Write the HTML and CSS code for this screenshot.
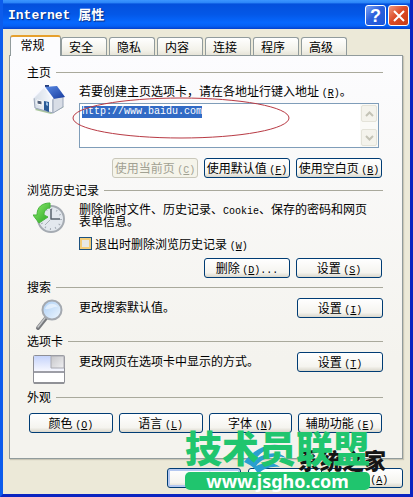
FILE: index.html
```html
<!DOCTYPE html>
<html lang="zh-CN">
<head>
    <meta charset="UTF-8">
    <meta name="viewport" content="width=device-width, initial-scale=1.0">
    <title>Internet 属性</title>
    <link rel="stylesheet" href="styles.css">
</head>
<body>
    <div class="window">
        <header class="title-bar">
            <h1>Internet 属性</h1>
            <button type="button" class="caption-button help" aria-label="帮助">?</button>
            <button type="button" class="caption-button close" aria-label="关闭">
                <svg width="12" height="12" viewBox="0 0 12 12"><path d="M1 1l10 10M11 1L1 11" stroke="#fff" stroke-width="2"/></svg>
            </button>
        </header>
        <main class="dialog">
            <div class="tabs" role="tablist">
                <button type="button" role="tab" class="tab active" aria-selected="true">常规</button>
                <button type="button" role="tab" class="tab">安全</button>
                <button type="button" role="tab" class="tab">隐私</button>
                <button type="button" role="tab" class="tab">内容</button>
                <button type="button" role="tab" class="tab">连接</button>
                <button type="button" role="tab" class="tab">程序</button>
                <button type="button" role="tab" class="tab">高级</button>
            </div>
            <div class="panel">
                <section class="group home">
                    <h2>主页</h2>
                    <div class="row">
                        <svg class="icon" width="32" height="32" viewBox="0 0 32 32">
                            <defs>
                                <linearGradient id="roof" x1="0" y1="0" x2="1" y2="1"><stop offset="0" stop-color="#5b8ce6"/><stop offset="1" stop-color="#173b9e"/></linearGradient>
                                <linearGradient id="wall" x1="0" y1="0" x2="1" y2="0"><stop offset="0" stop-color="#d5dde8"/><stop offset="1" stop-color="#f8fafc"/></linearGradient>
                            </defs>
                            <path d="M2 26l16 4 13-7-3-2-24 3z" fill="#a9c69c"/>
                            <path d="M12 1h4v6h-4z" fill="#253c79"/>
                            <path d="M1 14L11 4l9 10v15L2 24z" fill="url(#wall)" stroke="#9aa5b8"/>
                            <path d="M20 14l10-1v10l-10 6z" fill="#d8dde6" stroke="#9aa5b8"/>
                            <path d="M11 3l13-1 8 11-12 2z" fill="url(#roof)"/>
                            <path d="M0 14L11 3l9 12" fill="none" stroke="#f7f9ff" stroke-width="2"/>
                            <path d="M4 16l5 1v4l-5-1z" fill="#526079" stroke="#fff"/>
                            <path d="M11 17l5 1v10l-5-2z" fill="#2a5a96"/>
                            <path d="M13 18l2 1v3l-2-1z" fill="#9bc0e4"/>
                        </svg>
                        <div class="body">
                            <label for="home-page">若要创建主页选项卡，请在各地址行键入地址 <span class="key">(<u>R</u>)</span>。</label>
                            <div class="address">
                                <textarea id="home-page" spellcheck="false">http://www.baidu.com</textarea>
                                <div class="scroll">
                                    <button type="button" aria-label="向上"><svg width="9" height="6" viewBox="0 0 9 6"><path d="M1 5l3.500-3.500L8 5" fill="none" stroke="#c4c3b6" stroke-width="2"/></svg></button>
                                    <button type="button" aria-label="向下"><svg width="9" height="6" viewBox="0 0 9 6"><path d="M1 1l3.500 3.500L8 1" fill="none" stroke="#c4c3b6" stroke-width="2"/></svg></button>
                                </div>
                                <svg class="circle" viewBox="0 0 218 42"><ellipse cx="109" cy="21" rx="108" ry="20" fill="none" stroke="#b83a44"/></svg>
                            </div>
                        </div>
                    </div>
                    <div class="buttons">
                        <button type="button" class="button" disabled>使用当前页 <span class="key">(<u>C</u>)</span></button>
                        <button type="button" class="button">使用默认值 <span class="key">(<u>F</u>)</span></button>
                        <button type="button" class="button">使用空白页 <span class="key">(<u>B</u>)</span></button>
                    </div>
                </section>
                <section class="group history">
                    <h2>浏览历史记录</h2>
                    <div class="row">
                        <svg class="icon" width="32" height="32" viewBox="0 0 32 32">
                            <defs>
                                <linearGradient id="arrow" x1="0" y1="0" x2="1" y2="1"><stop offset="0" stop-color="#91ef70"/><stop offset="1" stop-color="#27a322"/></linearGradient>
                            </defs>
                            <circle cx="18" cy="17" r="13" fill="#e3e8ee" stroke="#a5abb2" stroke-width="2"/>
                            <circle cx="18" cy="17" r="10" fill="none" stroke="#a3abb4" stroke-width="2" stroke-dasharray="1 4.236"/>
                            <path d="M18 7v10h9" fill="none" stroke="#59636e" stroke-width="1.500"/>
                            <path d="M18 17l-6 6" stroke="#a8afb7"/>
                            <path d="M17 1C9 1 4 5 4 13H0l6 8 9-6-4-2c0-4 2-7 6-7z" fill="url(#arrow)" stroke="#49b53d"/>
                        </svg>
                        <div class="body">
                            <p>删除临时文件、历史记录、<span class="key">Cookie</span>、保存的密码和网页表单信息。</p>
                            <label class="check"><input type="checkbox"><span>退出时删除浏览历史记录 <span class="key">(<u>W</u>)</span></span></label>
                        </div>
                    </div>
                    <div class="buttons">
                        <button type="button" class="button">删除 <span class="key">(<u>D</u>)...</span></button>
                        <button type="button" class="button">设置 <span class="key">(<u>S</u>)</span></button>
                    </div>
                </section>
                <section class="group search">
                    <h2>搜索</h2>
                    <div class="row">
                        <svg class="icon" width="32" height="32" viewBox="0 0 32 32">
                            <defs>
                                <linearGradient id="lens" x1="0" y1="0" x2="1" y2="1"><stop offset="0" stop-color="#a9cdf5"/><stop offset="1" stop-color="#f0f8ff"/></linearGradient>
                            </defs>
                            <path d="M13 19L5 29" stroke="#77797c" stroke-width="4" stroke-linecap="round"/>
                            <path d="M12 19L5 28" stroke="#c4c6c8" stroke-width="1.500" stroke-linecap="round"/>
                            <circle cx="19" cy="11" r="9.500" fill="url(#lens)" stroke="#a4a9b0" stroke-width="2"/>
                            <path d="M12 10c2-6 9-7 13-2-4-1-8 3-13 2z" fill="#fff" opacity=".5"/>
                        </svg>
                        <p class="body">更改搜索默认值。</p>
                        <button type="button" class="button">设置 <span class="key">(<u>I</u>)</span></button>
                    </div>
                </section>
                <section class="group tab-options">
                    <h2>选项卡</h2>
                    <div class="row">
                        <svg class="icon" width="32" height="32" viewBox="0 0 32 32">
                            <defs>
                                <linearGradient id="page" x1="0" y1="0" x2="0" y2="1"><stop offset="0" stop-color="#c5d3fb"/><stop offset="1" stop-color="#f7f8ff"/></linearGradient>
                                <linearGradient id="page-back" x1="0" y1="0" x2="1" y2="1"><stop offset="0" stop-color="#c6c6ca"/><stop offset="1" stop-color="#efeff1"/></linearGradient>
                            </defs>
                            <rect x=".5" y="2.500" width="31" height="28" rx="1" fill="#fff" stroke="#8e8f96"/>
                            <path d="M1 3h17v12h13v3H1z" fill="url(#page)"/>
                            <path d="M18 3h13v12H18z" fill="url(#page-back)" stroke="#a9a9b0"/>
                            <path d="M1 19h30" stroke="#9d9ea6" stroke-width="2"/>
                            <path d="M1 30h30" stroke="#909196" stroke-width="2"/>
                        </svg>
                        <p class="body">更改网页在选项卡中显示的方式。</p>
                        <button type="button" class="button">设置 <span class="key">(<u>T</u>)</span></button>
                    </div>
                </section>
                <section class="group look">
                    <h2>外观</h2>
                    <div class="buttons">
                        <button type="button" class="button">颜色 <span class="key">(<u>O</u>)</span></button>
                        <button type="button" class="button">语言 <span class="key">(<u>L</u>)</span></button>
                        <button type="button" class="button">字体 <span class="key">(<u>N</u>)</span></button>
                        <button type="button" class="button">辅助功能 <span class="key">(<u>E</u>)</span></button>
                    </div>
                </section>
            </div>
            <footer class="actions">
                <button type="button" class="button default">确定</button>
                <button type="button" class="button">取消</button>
                <button type="button" class="button">应用 <span class="key">(<u>A</u>)</span></button>
            </footer>
        </main>
        <div class="site-mark">
            <svg width="58" height="34" viewBox="0 0 54 34">
                <path d="M2 20C14 4 34-2 46 7 32 3 20 8 14 17c10-7 24-8 30-1-12-4-25 1-30 8 8-4 18-4 24 1-10-1-17 2-22 7-2-5-7-9-14-12z" fill="#2b9fd0"/>
            </svg>
            <span>系统之家</span>
        </div>
        <div class="watermark">
            <strong>技术员联盟</strong>
            <span>www.jsgho.com</span>
        </div>
    </div>
    <script src="script.js"></script>
</body>
</html>
```

FILE: styles.css
```css
* {
    box-sizing: border-box;
}
body {
    margin: 0;
    font-family: "Noto Sans CJK SC", sans-serif;
    font-size: 12px;
    line-height: 12px;
    color: #000;
    background-color: #0831d9;
}
h1, h2, p {
    margin: 0;
    font-weight: normal;
}
button, textarea, input {
    font: inherit;
    margin: 0;
}
.key {
    font-family: "Liberation Mono", monospace;
    font-size: 10px;
    line-height: 0;
}
.window {
    position: relative;
    display: flex;
    flex-direction: column;
    min-height: 100vh;
    border: solid #0a24c0;
    border-width: 0 3px 3px;
    border-left-color: #0c5cec;
}
.title-bar {
    display: flex;
    align-items: center;
    gap: 2px;
    height: 29px;
    padding: 2px 1px 0 5px;
    background: linear-gradient(#3c96ff 0, #2c86f8 9%, #0450dc 14%, #0458e8 50%, #0668ff 78%, #0560f4 90%, #0340cc 100%);
}
.title-bar h1 {
    flex: 1;
    font-family: "Liberation Mono", "Noto Sans CJK SC", monospace;
    font-size: 13px;
    font-weight: bold;
    line-height: 20px;
    color: #fff;
    text-shadow: 1px 1px 1px #0a2c80;
}
.caption-button {
    display: flex;
    align-items: center;
    justify-content: center;
    width: 21px;
    height: 21px;
    padding: 0;
    border: 1px solid #fff;
    border-radius: 3px;
    color: #fff;
}
.help {
    font-family: "Liberation Sans", sans-serif;
    font-size: 18px;
    font-weight: bold;
    background: linear-gradient(135deg, #7ca2f4, #2b60dc 45%, #1c55d8);
}
.close {
    background: linear-gradient(135deg, #f0997f, #dc4c28 45%, #c83c14);
}
.dialog {
    flex: 1;
    padding: 6px 7px 6px 6px;
    background-color: #ece9d8;
}
.tabs {
    display: flex;
    align-items: flex-end;
    gap: 2px;
    height: 20px;
    padding-left: 1px;
}
.tab {
    width: 46px;
    height: 18px;
    padding: 0 10px 0 4px;
    border: 1px solid #919b9c;
    border-bottom: 0;
    border-radius: 3px 3px 0 0;
    line-height: 14px;
    background: linear-gradient(#fff, #f3f2ea 70%, #e6e4d8);
}
.tab.active {
    position: relative;
    width: 51px;
    height: 20px;
    margin: 0 -2px 0 0;
    padding: 0 12px 2px 6px;
    border-top: 2px solid #e6a02d;
    background: #fcfcfe;
}
.panel {
    padding: 8px 19px 25px 17px;
    border: 1px solid #919b9c;
    box-shadow: 1px 1px 1px #c9c6b6;
    background: linear-gradient(#fcfcfe, #f4f3ee 75%);
}
.active::after {
    content: "";
    position: absolute;
    left: 0;
    right: 0;
    bottom: -1px;
    height: 1px;
    background-color: #fcfcfe;
}
.group h2 {
    display: flex;
    align-items: center;
    gap: 5px;
    font-size: 12px;
    line-height: 16px;
}
.group h2::after {
    content: "";
    flex: 1;
    height: 1px;
    background-color: #a9a99c;
}
.row {
    display: flex;
    align-items: flex-start;
}
.icon {
    flex: none;
    margin: 4px 14px 0 6px;
}
.body {
    flex: 1;
    min-width: 0;
}
.home {
    padding-bottom: 4px;
}
.home .body {
    padding: 5px 4px 0 0;
}
.home label {
    display: block;
    white-space: nowrap;
}
.address {
    position: relative;
    display: flex;
    height: 45px;
    margin-top: 6px;
    border: 1px solid #7f9db9;
    background-color: #fff;
}
.address textarea {
    flex: 1;
    min-width: 0;
    padding: 2px;
    border: 0;
    outline: 0;
    resize: none;
    overflow: hidden;
    background: none;
    font-family: "Liberation Mono", "Noto Sans CJK SC", monospace;
    font-size: 10px;
    line-height: 12px;
}
.address textarea::selection {
    color: #fff;
    background-color: #316ac5;
}
.scroll {
    display: flex;
    flex-direction: column;
    justify-content: space-between;
    padding: 1px;
    background-color: #fafaf7;
}
.scroll button {
    display: flex;
    align-items: center;
    justify-content: center;
    width: 16px;
    height: 17px;
    padding: 0;
    border: 1px solid #e4e3d9;
    border-radius: 2px;
    background-color: #f4f3ec;
}
.circle {
    position: absolute;
    left: -8px;
    top: -7px;
    width: 218px;
    height: 42px;
    pointer-events: none;
}
.buttons {
    display: flex;
    justify-content: flex-end;
    gap: 6px;
    padding-right: 1px;
}
.button {
    width: 86px;
    height: 20px;
    padding: 0;
    border: 1px solid #003c74;
    border-radius: 3px;
    line-height: 16px;
    white-space: nowrap;
    color: #000;
    background: linear-gradient(#fff, #f5f4ef 75%, #dad7cc);
}
.button:disabled {
    color: #a1a192;
    border-color: #c9c7ba;
    background: #f5f4ea;
}
.home .buttons {
    margin-top: 10px;
}
.history {
    min-height: 97px;
}
.history .row {
    height: 60px;
}
.history .body {
    padding: 5px 10px 0 0;
}
.check {
    display: flex;
    align-items: center;
    gap: 3px;
    margin-top: 10px;
    white-space: nowrap;
}
.check input {
    appearance: none;
    width: 13px;
    height: 13px;
    border: 1px solid #1c5180;
    background-color: #e8e8e4;
    box-shadow: inset 0 0 0 2px #f4cd78;
}
.check input:checked {
    background-color: #21a121;
}
.search {
    min-height: 54px;
}
.tab-options {
    min-height: 56px;
}
.search .icon, .tab-options .icon {
    margin-bottom: -4px;
}
.search .body, .tab-options .body {
    padding-top: 6px;
    white-space: nowrap;
}
.search .button, .tab-options .button {
    margin-top: 3px;
}
.look .buttons {
    justify-content: space-between;
    padding-left: 2px;
    margin-top: 8px;
}
.look .button {
    width: 84px;
}
.actions {
    display: flex;
    justify-content: flex-end;
    gap: 7px;
    padding-top: 9px;
}
.actions .button {
    width: 74px;
}
.button.default {
    box-shadow: inset 0 0 0 2px #b4c8f0;
}
.site-mark {
    position: absolute;
    right: 24px;
    bottom: 18px;
    display: flex;
    align-items: center;
    pointer-events: none;
}
.site-mark span {
    font-size: 22px;
    font-weight: 900;
    line-height: 24px;
    color: #151515;
}
.watermark {
    position: absolute;
    right: 40px;
    bottom: 4px;
    display: flex;
    flex-direction: column;
    gap: 5px;
    pointer-events: none;
}
.watermark strong {
    font-size: 37px;
    font-weight: 900;
    line-height: 40px;
    color: #20c56e;
}
.watermark span {
    border-radius: 5px;
    font-family: "Noto Sans", sans-serif;
    font-size: 18px;
    font-weight: bold;
    line-height: 18px;
    text-align: center;
    color: #fff;
    background-color: #20c56e;
}
```

FILE: script.js
```js
const homePage = document.getElementById('home-page');
homePage.focus();
homePage.select();
```
